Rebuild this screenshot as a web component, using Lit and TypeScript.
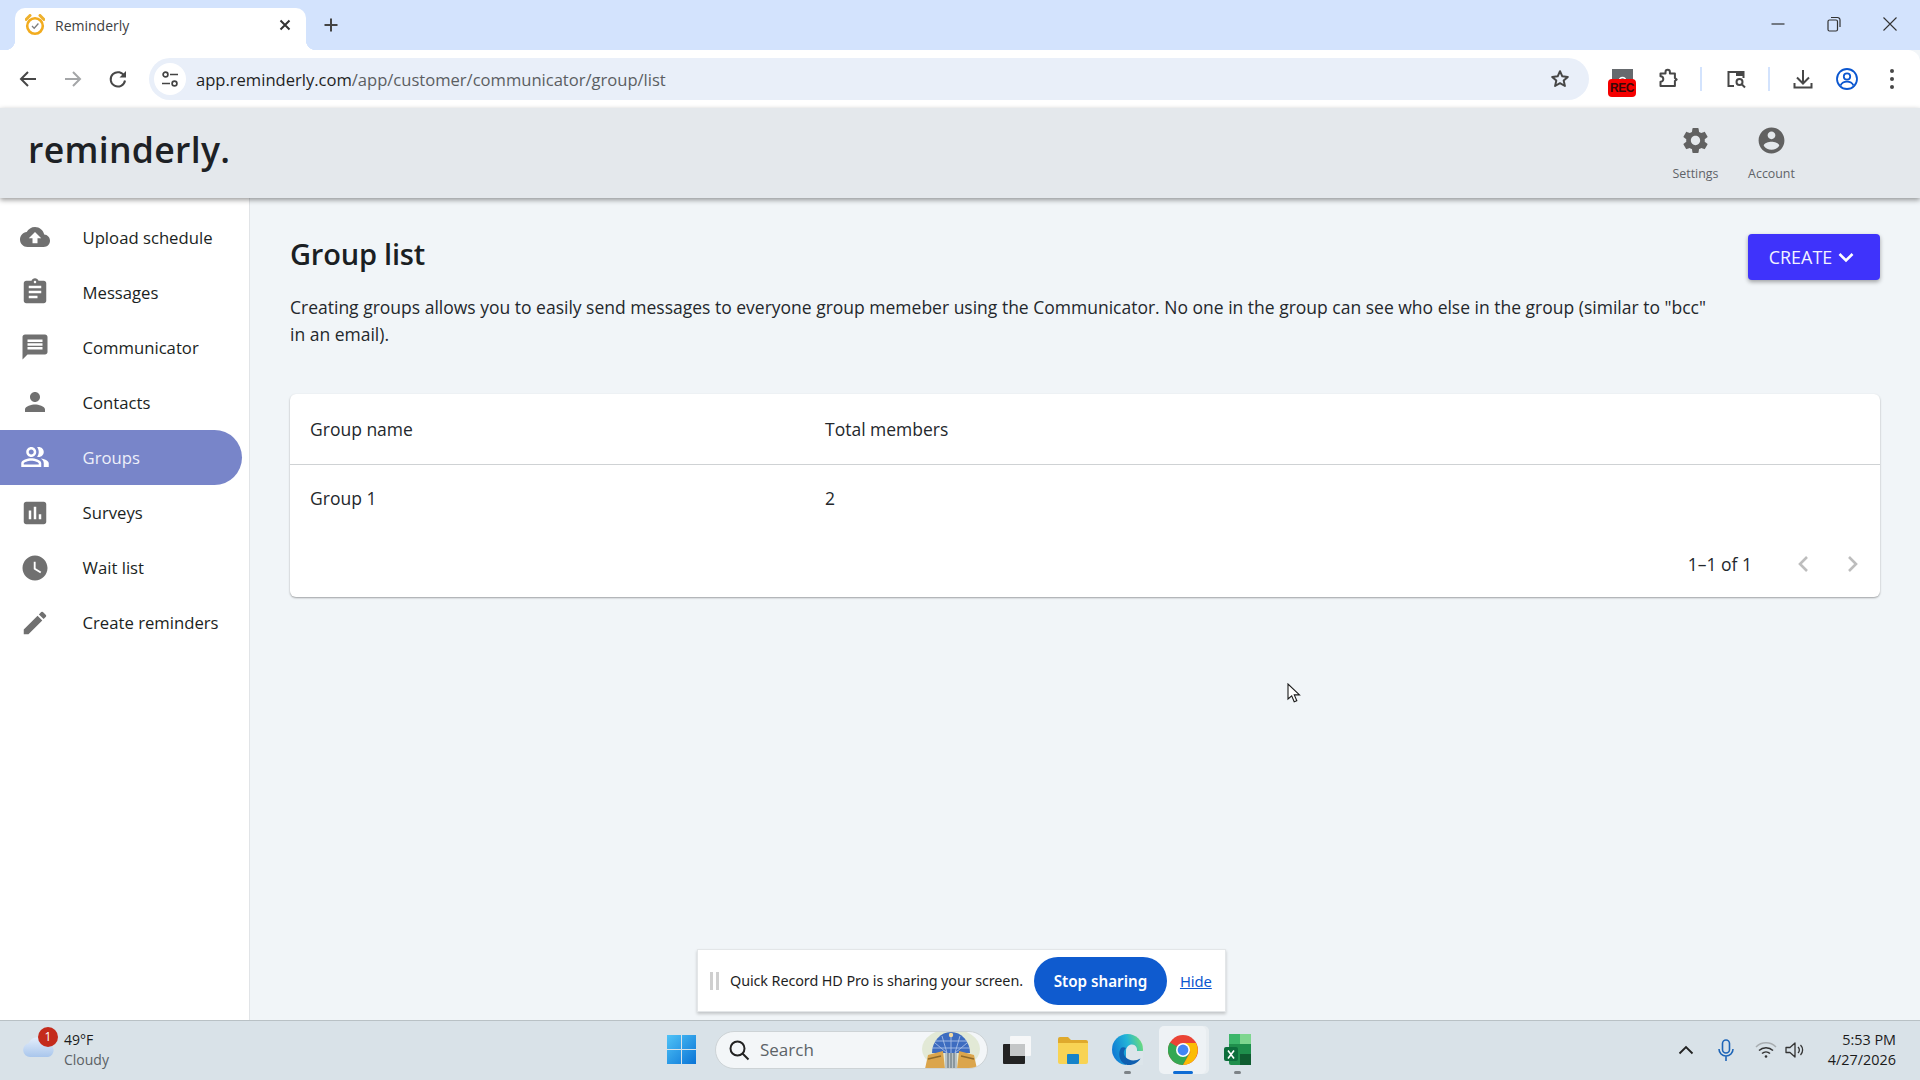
import { LitElement, html, css, svg } from 'lit';
import { customElement } from 'lit/decorators.js';

const navItems = [
  { label: 'Upload schedule', d: 'M19.35 10.04C18.67 6.59 15.64 4 12 4 9.11 4 6.6 5.64 5.35 8.04 2.34 8.36 0 10.91 0 14c0 3.31 2.69 6 6 6h13c2.76 0 5-2.24 5-5 0-2.64-2.05-4.78-4.65-4.96zM14 13v4h-4v-4H7l5-5 5 5h-3z' },
  { label: 'Messages', d: 'M19 3h-4.18C14.4 1.84 13.3 1 12 1c-1.3 0-2.4.84-2.82 2H5c-1.1 0-2 .9-2 2v14c0 1.1.9 2 2 2h14c1.1 0 2-.9 2-2V5c0-1.1-.9-2-2-2zm-7 0c.55 0 1 .45 1 1s-.45 1-1 1-1-.45-1-1 .45-1 1-1zm2 14H7v-2h7v2zm3-4H7v-2h10v2zm0-4H7V7h10v2z' },
  { label: 'Communicator', d: 'M20 2H4c-1.1 0-1.99.9-1.99 2L2 22l4-4h14c1.1 0 2-.9 2-2V4c0-1.1-.9-2-2-2zm-2 12H6v-2h12v2zm0-3H6V9h12v2zm0-3H6V6h12v2z' },
  { label: 'Contacts', d: 'M12 12c2.21 0 4-1.79 4-4s-1.79-4-4-4-4 1.79-4 4 1.79 4 4 4zm0 2c-2.67 0-8 1.34-8 4v2h16v-2c0-2.66-5.33-4-8-4z' },
  { label: 'Groups', active: true, d: 'M16.67 13.13C18.04 14.06 19 15.32 19 17v3h4v-3c0-2.18-3.57-3.47-6.33-3.87zM15 12c2.21 0 4-1.79 4-4s-1.79-4-4-4c-.47 0-.91.1-1.33.24C14.5 5.27 15 6.58 15 8s-.5 2.73-1.33 3.76c.42.14.86.24 1.33.24zM9 12c2.21 0 4-1.79 4-4s-1.79-4-4-4-4 1.79-4 4 1.79 4 4 4zm0-6c1.1 0 2 .9 2 2s-.9 2-2 2-2-.9-2-2 .9-2 2-2zM9 13c-2.67 0-8 1.34-8 4v3h16v-3c0-2.66-5.33-4-8-4zm6 5H3v-.99C3.2 16.29 6.3 15 9 15s5.8 1.29 6 2v1z' },
  { label: 'Surveys', d: 'M19 3H5c-1.1 0-2 .9-2 2v14c0 1.1.9 2 2 2h14c1.1 0 2-.9 2-2V5c0-1.1-.9-2-2-2zM9 17H7v-7h2v7zm4 0h-2V7h2v10zm4 0h-2v-4h2v4z' },
  { label: 'Wait list', d: 'M12 2C6.5 2 2 6.5 2 12s4.5 10 10 10 10-4.5 10-10S17.5 2 12 2zm4.2 14.2L11 13V7h1.5v5.2l4.5 2.7-.8 1.3z' },
  { label: 'Create reminders', d: 'M3 17.25V21h3.75L17.81 9.94l-3.75-3.75L3 17.25zM20.71 7.04c.39-.39.39-1.02 0-1.41l-2.34-2.34a.9959.9959 0 0 0-1.41 0l-1.83 1.83 3.75 3.75 1.83-1.83z' },
];

const gear = 'M19.14 12.94c.04-.3.06-.61.06-.94 0-.32-.02-.64-.07-.94l2.03-1.58c.18-.14.23-.41.12-.61l-1.92-3.32c-.12-.22-.37-.29-.59-.22l-2.39.96c-.5-.38-1.03-.7-1.62-.94l-.36-2.54c-.04-.24-.24-.41-.48-.41h-3.84c-.24 0-.43.17-.47.41l-.36 2.54c-.59.24-1.13.57-1.62.94l-2.39-.96c-.22-.08-.47 0-.59.22L2.74 8.87c-.12.21-.08.47.12.61l2.03 1.58c-.05.3-.09.63-.09.94s.02.64.07.94l-2.03 1.58c-.18.14-.23.41-.12.61l1.92 3.32c.12.22.37.29.59.22l2.39-.96c.5.38 1.03.7 1.62.94l.36 2.54c.05.24.24.41.48.41h3.84c.24 0 .44-.17.47-.41l.36-2.54c.59-.24 1.13-.56 1.62-.94l2.39.96c.22.08.47 0 .59-.22l1.92-3.32c.12-.22.07-.47-.12-.61l-2.01-1.58zM12 15.6c-1.98 0-3.6-1.62-3.6-3.6s1.62-3.6 3.6-3.6 3.6 1.62 3.6 3.6-1.62 3.6-3.6 3.6z';
const account = 'M12 2C6.48 2 2 6.48 2 12s4.48 10 10 10 10-4.48 10-10S17.52 2 12 2zm0 3c1.66 0 3 1.34 3 3s-1.34 3-3 3-3-1.34-3-3 1.34-3 3-3zm0 14.2c-2.5 0-4.71-1.28-6-3.22.03-1.99 4-3.08 6-3.08 1.99 0 5.97 1.09 6 3.08-1.29 1.94-3.5 3.22-6 3.22z';

const matIcon = (d: string, size: number) => html`<svg width=${size} height=${size} viewBox="0 0 24 24" fill="currentColor"><path d=${d}></path></svg>`;

const line = (content: unknown, w = 24, h = 24) => html`<svg width=${w} height=${h} viewBox="0 0 ${w} ${h}" fill="none" stroke="#474747" stroke-width="2">${content}</svg>`;

@customElement('app-root')
export class AppRoot extends LitElement {
  static styles = css`
    :host {
      display: flex;
      flex-direction: column;
      position: relative;
      width: 1920px;
      height: 1080px;
      overflow: hidden;
      font-family: 'Open Sans', 'Noto Sans', sans-serif;
      color: #1b1f23;
      background: #f1f5f8;
    }
    svg { display: block; flex: none; }

    /* browser chrome */
    .tabstrip {
      height: 50px;
      flex: none;
      display: flex;
      background: #d3e3fd;
    }
    .tab {
      position: relative;
      width: 291px;
      height: 42px;
      margin: 8px 0 0 15px;
      padding: 0 15px 8px 10px;
      box-sizing: border-box;
      display: flex;
      align-items: center;
      background: #fff;
      border-radius: 10px 10px 0 0;
      font-size: 14px;
      color: #3c4043;
    }
    .tab::before, .tab::after {
      content: '';
      position: absolute;
      bottom: 0;
      width: 10px;
      height: 10px;
    }
    .tab::before { left: -10px; background: radial-gradient(circle at 0 0, transparent 10px, #fff 10.5px); }
    .tab::after { right: -10px; background: radial-gradient(circle at 100% 0, transparent 10px, #fff 10.5px); }
    .tab-title { flex: 1; margin-left: 10px; }
    .new-tab { margin: 13px 0 0 13px; }
    .window-controls {
      margin-left: auto;
      padding-right: 2px;
      display: flex;
      align-items: flex-start;
    }
    .win-btn { width: 56px; height: 48px; display: flex; align-items: center; justify-content: center; }

    .toolbar {
      height: 58px;
      flex: none;
      display: flex;
      align-items: center;
      padding-left: 5px;
      background: #fff;
      border-radius: 0 12px 0 0;
      position: relative;
      z-index: 1;
    }
    .tb-btn { width: 45px; display: flex; align-items: center; justify-content: center; }
    .urlbar {
      width: 1440px;
      height: 42px;
      margin-left: 9px;
      box-sizing: border-box;
      padding: 0 17px 0 5px;
      display: flex;
      align-items: center;
      background: #e9eff9;
      border-radius: 21px;
    }
    .site-icon {
      width: 32px;
      height: 32px;
      border-radius: 50%;
      background: #fff;
      display: flex;
      align-items: center;
      justify-content: center;
    }
    .url {
      flex: 1;
      margin-left: 10px;
      font-size: 16.6px;
      color: #5b5e62;
      letter-spacing: -0.02px;
    }
    .url b { font-weight: 400; color: #1f1f1f; }
    .tb-right { display: flex; align-items: center; margin-left: 11px; }
    .slot { display: flex; align-items: center; justify-content: center; height: 40px; }
    .w14 { width: 14px; }
    .w18 { width: 18px; }
    .w34 { width: 34px; }
    .w44 { width: 44px; }
    .w48 { width: 48px; }
    .w52 { width: 52px; }
    .w54 { width: 54px; }
    .w56 { width: 56px; }
    .sep { width: 2px; height: 24px; background: #d3e3fd; }
    .rec { width: 28px; height: 28px; margin-top: 8px; display: flex; flex-direction: column; align-items: center; }
    .rec-badge {
      width: 28px;
      height: 18px;
      margin-top: -2px;
      background: #f50000;
      border-radius: 4px;
      color: #3a0808;
      font-family: 'Liberation Sans', sans-serif;
      font-weight: 700;
      font-size: 12px;
      letter-spacing: -0.4px;
      line-height: 19px;
      text-align: center;
    }

    /* app header */
    .app-header {
      height: 90px;
      flex: none;
      display: flex;
      align-items: center;
      padding-left: 28px;
      background: #e4e8ec;
      box-shadow: 0 2px 5px rgba(0, 0, 0, 0.4);
      position: relative;
      z-index: 1;
    }
    .logo { font-size: 35.6px; font-weight: 600; letter-spacing: 0.3px; color: #1d2125; line-height: 1; margin-bottom: 7px; }
    .header-actions { margin-left: auto; margin-right: 125px; display: flex; gap: 29px; }
    .header-action {
      width: 47px;
      height: 57px;
      margin-top: 1px;
      display: flex;
      flex-direction: column;
      align-items: center;
      justify-content: space-between;
      font-size: 12.4px;
      color: #5f6368;
    }
    .header-action svg { color: #616161; }

    /* page */
    .body { flex: 1; display: flex; min-height: 0; }
    .sidebar {
      width: 250px;
      flex: none;
      box-sizing: border-box;
      padding: 11.5px 0 0;
      background: #fff;
      border-right: 1px solid #e1e4e7;
    }
    .nav-item {
      width: 242px;
      height: 55.1px;
      display: flex;
      align-items: center;
      padding-left: 20px;
      box-sizing: border-box;
      font-size: 16.7px;
      color: #1b1f23;
      border-radius: 0 28px 28px 0;
    }
    .nav-item svg { color: #707070; }
    .nav-item span { margin-left: 32.5px; }
    .nav-item.active { background: #7885c9; color: #eef0fa; }
    .nav-item.active svg { color: #fff; }

    .main { flex: 1; min-width: 0; padding: 36px 40px 0; }
    .intro { display: flex; justify-content: space-between; align-items: flex-start; }
    .intro-text { width: 1425px; }
    h1 { margin: 0; font-size: 29px; font-weight: 600; line-height: 40px; color: #1b1f23; letter-spacing: -0.2px; }
    .intro-text p { margin: 20px 0 0; font-size: 17.5px; line-height: 27px; color: #24282c; }
    .create {
      width: 132px;
      height: 46px;
      display: flex;
      align-items: center;
      justify-content: center;
      gap: 4px;
      padding: 0 3px 0 0;
      border: 0;
      border-radius: 4px;
      background: #3f33fb;
      color: #f2f2ff;
      font: 17.9px 'Open Sans', sans-serif;
      box-shadow: 0 2px 4px rgba(0, 0, 0, 0.35);
    }
    .card {
      margin-top: 46px;
      background: #fff;
      border-radius: 6px;
      box-shadow: 0 1px 2px rgba(0, 0, 0, 0.35);
      font-size: 17.5px;
      color: #24282c;
    }
    .row { display: grid; grid-template-columns: 515px 1fr; padding: 0 20px; align-items: center; }
    .row.head { height: 70px; border-bottom: 1px solid #cfd2d4; }
    .row.item { height: 66px; }
    .card-foot { height: 66px; display: flex; align-items: center; justify-content: flex-end; padding-right: 2px; }
    .card-foot span { margin-right: 26px; }
    .pager { width: 50px; display: flex; justify-content: center; }

    /* overlays */
    .share-bar {
      position: absolute;
      left: 697px;
      top: 949px;
      width: 529px;
      height: 63px;
      box-sizing: border-box;
      display: flex;
      align-items: center;
      padding-left: 12px;
      background: #fff;
      border: 1px solid #e3e6e8;
      box-shadow: 0 2px 3px rgba(0, 0, 0, 0.2);
      font-family: 'Noto Sans', sans-serif;
      font-size: 14.4px;
      color: #1f1f1f;
      letter-spacing: -0.1px;
    }
    .grip { width: 9px; height: 18px; border-left: 3px solid #cfcfcf; border-right: 3px solid #cfcfcf; box-sizing: border-box; }
    .share-text { margin-left: 11px; }
    .stop {
      margin-left: 11px;
      width: 133px;
      height: 48px;
      border: 0;
      border-radius: 24px;
      background: #0f5bcf;
      color: #fff;
      font: 600 15.2px 'Noto Sans', sans-serif;
    }
    .hide { margin-left: 13px; color: #0b57d0; text-decoration: underline; font-size: 14.8px; }
    .cursor { position: absolute; left: 1287px; top: 683px; }

    /* taskbar */
    .taskbar {
      height: 60px;
      flex: none;
      display: flex;
      align-items: center;
      padding-bottom: 2px;
      background: #d9e2e8;
      border-top: 1px solid #b9c1c5;
      box-sizing: border-box;
    }
    .weather { width: 666px; flex: none; display: flex; align-items: center; padding-left: 22px; box-sizing: border-box; }
    .weather-icon { position: relative; width: 42px; height: 40px; display: flex; align-items: center; }
    .weather-icon svg { margin-bottom: 8px; }
    .badge {
      position: absolute;
      left: 16px;
      top: -3px;
      width: 20px;
      height: 20px;
      border-radius: 50%;
      background: #c42b1c;
      color: #fff;
      font-size: 12px;
      line-height: 20px;
      text-align: center;
    }
    .weather-text { font-size: 14px; line-height: 20px; color: #1b1b1b; }
    .weather-text div + div { color: #5b6165; }
    .centre { display: flex; align-items: center; }
    .search {
      width: 273px;
      height: 38px;
      margin-left: 18px;
      padding: 0 6px 0 14px;
      box-sizing: border-box;
      display: flex;
      align-items: center;
      background: #f3f6f8;
      border: 1px solid #cdd3d6;
      border-radius: 19px;
      overflow: hidden;
      font-size: 17px;
      color: #5c6367;
    }
    .search svg:first-child { margin-left: -2px; }
    .search-label { margin-left: 10px; flex: 1; }
    .task { width: 55px; height: 48px; position: relative; display: flex; align-items: center; justify-content: center; }
    .task.first { width: 57px; }
    .task.current { background: #eef2f5; border-radius: 5px; width: 47px; margin: 0 4px; box-shadow: 3px 0 0 #e8edf0; }
    .run { position: absolute; bottom: 0; left: 50%; width: 7px; height: 3px; margin-left: -3.5px; background: #7d8387; border-radius: 2px; }
    .task.current .run { width: 20px; margin-left: -10px; background: #0f6cd4; }
    .tray { margin-left: auto; padding-right: 24px; display: flex; align-items: center; }
    .tray-icon { width: 40px; display: flex; justify-content: center; }
    .tray-icon.tight { margin-left: -10px; }
    .clock { margin-left: 12px; text-align: right; font-size: 14.4px; line-height: 20px; color: #1b1b1b; }
  `;

  render() {
    return html`
      <div class="tabstrip">
        <div class="tab">
          <svg width="20" height="22" viewBox="0 0 20 22">
            <path d="M1 5.5 5 1.5 M19 5.5 15 1.5" stroke="#eeb12c" stroke-width="3" stroke-linecap="round"></path>
            <circle cx="10" cy="12" r="7.8" fill="#fff" stroke="#f2ac1f" stroke-width="2.6"></circle>
            <path d="M7 12l2.2 2.2L13.4 9.5" fill="none" stroke="#7d7d7d" stroke-width="1.3"></path>
          </svg>
          <span class="tab-title">Reminderly</span>
          <svg width="12" height="12" viewBox="0 0 12 12"><path d="M1.5 1.5l9 9M10.5 1.5l-9 9" stroke="#333" stroke-width="2"></path></svg>
        </div>
        <div class="new-tab">
          <svg width="24" height="24" viewBox="0 0 24 24"><path d="M12 5.5v13M5.5 12h13" stroke="#444" stroke-width="2"></path></svg>
        </div>
        <div class="window-controls">
          <div class="win-btn"><svg width="14" height="14" viewBox="0 0 14 14"><path d="M0.5 7h13" stroke="#333" stroke-width="1.2"></path></svg></div>
          <div class="win-btn"><svg width="14" height="16" viewBox="0 0 14 16" fill="none" stroke="#333" stroke-width="1.2"><rect x="1" y="4" width="9.5" height="11" rx="1.5"></rect><path d="M4 1.5h6.5a2.5 2.5 0 0 1 2.5 2.5v7"></path></svg></div>
          <div class="win-btn"><svg width="14" height="14" viewBox="0 0 14 14"><path d="M.5.5l13 13M13.5.5l-13 13" stroke="#333" stroke-width="1.1"></path></svg></div>
        </div>
      </div>

      <div class="toolbar">
        <div class="tb-btn">${line(svg`<path d="M20 12H5.5M12 5l-7 7 7 7"></path>`)}</div>
        <div class="tb-btn"><svg width="24" height="24" viewBox="0 0 24 24" fill="none" stroke="#a4a6a8" stroke-width="2"><path d="M4 12h14.5M12 5l7 7-7 7"></path></svg></div>
        <div class="tb-btn">${line(svg`<path d="M18.5 9.5A7.2 7.2 0 1 0 19 13.5"></path><path d="M20 4v6.5h-6.5z" fill="#474747" stroke="none"></path>`)}</div>
        <div class="urlbar">
          <div class="site-icon">
            <svg width="18" height="18" viewBox="0 0 18 18" fill="none" stroke="#444" stroke-width="1.7"><circle cx="4.5" cy="4.5" r="2.4"></circle><path d="M9 4.5h8M1 13.5h8"></path><circle cx="13.5" cy="13.5" r="2.4"></circle></svg>
          </div>
          <div class="url"><b>app.reminderly.com</b>/app/customer/communicator/group/list</div>
          ${line(svg`<path d="M12 4.2l2.3 5.1 5.5.6-4.1 3.7 1.2 5.4L12 16.2 7.1 19l1.2-5.4-4.1-3.7 5.500-.6z" stroke-linejoin="round"></path>`)}
        </div>
        <div class="tb-right">
          <div class="slot w44">
            <div class="rec">
              <svg width="21" height="12" viewBox="0 0 21 12"><rect width="21" height="12" fill="#666a6e"></rect><path d="M7 12a3.5 3.5 0 0 1 7 0" fill="none" stroke="#fff" stroke-width="1.5"></path></svg>
              <div class="rec-badge">REC</div>
            </div>
          </div>
          <div class="slot w48">${line(svg`<path d="M4.5 6.5h5V5a2.2 2.2 0 0 1 4.4 0v1.500h5v4.500l1.800 1.500-1.800 1.500v5H4.500v-4.200a2.800 2.800 0 0 0 0-5.600z" stroke-linejoin="round"></path>`)}</div>
          <div class="slot w18"><div class="sep"></div></div>
          <div class="slot w52">${line(svg`<path d="M10 19H4.500V5h15v6"></path><rect x="12" y="5" width="8" height="4" fill="#474747" stroke="none"></rect><circle cx="15.500" cy="15" r="3"></circle><path d="M18 17.500l3 3"></path>`)}</div>
          <div class="slot w14"><div class="sep"></div></div>
          <div class="slot w54">${line(svg`<path d="M12 3v13M6 10.500l6 6 6-6M3.500 16v4.500h17V16"></path>`)}</div>
          <div class="slot w34">
            <svg width="24" height="24" viewBox="0 0 24 24" fill="none" stroke="#0b57d0" stroke-width="1.800"><circle cx="12" cy="12" r="10"></circle><circle cx="12" cy="9.500" r="3.200"></circle><path d="M5.500 18.500c1.500-3 4-3.800 6.500-3.800s5 .8 6.500 3.800"></path></svg>
          </div>
          <div class="slot w56">
            <svg width="6" height="22" viewBox="0 0 6 22" fill="#474747"><circle cx="3" cy="3" r="2"></circle><circle cx="3" cy="11" r="2"></circle><circle cx="3" cy="19" r="2"></circle></svg>
          </div>
        </div>
      </div>

      <div class="app-header">
        <div class="logo">reminderly.</div>
        <div class="header-actions">
          <div class="header-action">${matIcon(gear, 31)}<span>Settings</span></div>
          <div class="header-action">${matIcon(account, 31)}<span>Account</span></div>
        </div>
      </div>

      <div class="body">
        <nav class="sidebar">
          ${navItems.map(
            (n) => html`<div class="nav-item ${n.active ? 'active' : ''}">${matIcon(n.d, 30)}<span>${n.label}</span></div>`
          )}
        </nav>
        <main class="main">
          <div class="intro">
            <div class="intro-text">
              <h1>Group list</h1>
              <p>Creating groups allows you to easily send messages to everyone group memeber using the Communicator. No one in the group can see who else in the group (similar to "bcc" in an email).</p>
            </div>
            <button class="create">CREATE
              <svg width="20" height="18" viewBox="0 0 20 18" fill="none" stroke="#fff" stroke-width="2.6"><path d="M3.500 6l6.500 6.500L16.500 6"></path></svg>
            </button>
          </div>
          <div class="card">
            <div class="row head"><div>Group name</div><div>Total members</div></div>
            <div class="row item"><div>Group 1</div><div>2</div></div>
            <div class="card-foot">
              <span>1–1 of 1</span>
              <div class="pager"><svg width="14" height="18" viewBox="0 0 14 18" fill="none" stroke="#bdbdbd" stroke-width="2.6"><path d="M11 2L4 9l7 7"></path></svg></div>
              <div class="pager"><svg width="14" height="18" viewBox="0 0 14 18" fill="none" stroke="#bdbdbd" stroke-width="2.6"><path d="M3 2l7 7-7 7"></path></svg></div>
            </div>
          </div>
        </main>
      </div>

      <div class="taskbar">
        <div class="weather">
          <div class="weather-icon">
            <svg width="32" height="24" viewBox="0 0 32 24"><defs><linearGradient id="cl" x1="0" y1="0" x2="0" y2="1"><stop offset="0" stop-color="#e4eefb"></stop><stop offset="1" stop-color="#a9c6ec"></stop></linearGradient></defs><path d="M8 23a7 7 0 0 1-1.5-13.8A10 10 0 0 1 25 9.5 6.8 6.8 0 0 1 26 23z" fill="url(#cl)"></path></svg>
            <div class="badge">1</div>
          </div>
          <div class="weather-text"><div>49°F</div><div>Cloudy</div></div>
        </div>
        <div class="centre">
          <svg width="31" height="31" viewBox="0 0 31 31">
            <defs><linearGradient id="win" x1="0" y1="0" x2="1" y2="1"><stop offset="0" stop-color="#4fc3f7"></stop><stop offset="1" stop-color="#0a74d6"></stop></linearGradient></defs>
            <path d="M1 1h14v14H1zM16 1h14v14H16zM1 16h14v14H1zM16 16h14v14H16z" fill="url(#win)"></path>
          </svg>
          <div class="search">
            <svg width="22" height="22" viewBox="0 0 22 22" fill="none" stroke="#222" stroke-width="2"><circle cx="9.5" cy="9.5" r="7"></circle><path d="M14.5 14.5l6 6"></path></svg>
            <span class="search-label">Search</span>
            <svg width="60" height="38" viewBox="0 0 60 38">
              <ellipse cx="30" cy="18" rx="29" ry="20" fill="#e2e9d6"></ellipse>
              <path d="M11 22a19 21 0 0 1 38 0z" fill="#3d6cc0"></path>
              <path d="M30 2v20M21 5l5 17M39 5l-5 17M14 12l12 10M46 12L34 22M11 17h38M14 10h32" stroke="#a9c0e6" stroke-width="0.9" fill="none"></path>
              <circle cx="30" cy="4" r="2.200" fill="#f3d9a0"></circle>
              <path d="M4 38l3-14 15-4 2 18zM56 38l-3-14-15-4-2 18z" fill="#dba54c"></path>
              <path d="M7 28l13-3M53 28l-13-3" stroke="#8f6a2a" stroke-width="1.500"></path>
              <path d="M24 38V22h12v16z" fill="#b9c2c6"></path>
              <path d="M27 22v16M30 22v16M33 22v16" stroke="#5d6d75" stroke-width="1"></path>
            </svg>
          </div>
          <div class="task first">
            <svg width="28" height="28" viewBox="0 0 28 28">
              <rect x="7" y="0" width="21" height="20" rx="1" fill="#f6f7f8"></rect>
              <rect x="0" y="8" width="22" height="20" rx="1" fill="#232323"></rect>
              <rect x="7" y="8" width="15" height="12" fill="#c4c6c7"></rect>
            </svg>
          </div>
          <div class="task">
            <svg width="30" height="28" viewBox="0 0 30 28"><path d="M0 3a2 2 0 0 1 2-2h8l3 3h15a2 2 0 0 1 2 2v3H0z" fill="#dfa92c"></path><path d="M0 7h30v19a2 2 0 0 1-2 2H2a2 2 0 0 1-2-2z" fill="#f8d354"></path><rect x="9" y="18" width="12" height="10" rx="1" fill="#1683c9"></rect></svg>
          </div>
          <div class="task">
            <svg width="31" height="31" viewBox="0 0 31 31">
              <defs><linearGradient id="edge" x1="0" y1="0.600" x2="1" y2="0.300"><stop offset="0" stop-color="#0f78d4"></stop><stop offset="0.550" stop-color="#22b4d8"></stop><stop offset="1" stop-color="#6fdc78"></stop></linearGradient></defs>
              <circle cx="15.5" cy="15.5" r="15.5" fill="url(#edge)"></circle>
              <path d="M14 17c0-4 3-6.500 6-6.500 3.500 0 5.500 3 5 6.500h6v14H14z" fill="#dce5ea"></path>
              <path d="M9 14C5 20 8 31 17 31c5 0 9-2.500 11.500-6.500-4.500 2.500-11.500 3-15-1.500-2.500-3-2-6.500.5-9-2-1-4-1-5 0z" fill="#0f5fb0"></path>
            </svg>
            <div class="run"></div>
          </div>
          <div class="task current">
            <svg width="30" height="30" viewBox="0 0 30 30">
              <circle cx="15" cy="15" r="15" fill="#ea4335"></circle>
              <path d="M15 15L2 7.500A15 15 0 0 0 15 30l7-13z" fill="#34a853"></path>
              <path d="M15 8h13a15 15 0 0 1-13 22l7.500-13z" fill="#fbbc05"></path>
              <circle cx="15" cy="15" r="7" fill="#fff"></circle>
              <circle cx="15" cy="15" r="5.400" fill="#4285f4"></circle>
            </svg>
            <div class="run"></div>
          </div>
          <div class="task">
            <svg width="27" height="31" viewBox="0 0 27 31">
              <rect x="5" y="0" width="22" height="31" rx="2" fill="#1f8f4c"></rect>
              <rect x="16" y="0" width="11" height="10" fill="#7ed68f"></rect>
              <rect x="5" y="0" width="11" height="10" fill="#3cb66a"></rect>
              <rect x="16" y="20" width="11" height="11" fill="#0f5c30"></rect>
              <rect x="0" y="13" width="14" height="14" rx="2" fill="#0d6e3c"></rect>
              <path d="M4 16.500l6 8M10 16.500l-6 8" stroke="#fff" stroke-width="1.6"></path>
            </svg>
            <div class="run"></div>
          </div>
        </div>
        <div class="tray">
          <div class="tray-icon"><svg width="16" height="10" viewBox="0 0 16 10" fill="none" stroke="#222" stroke-width="1.8"><path d="M1.500 8.500L8 2l6.500 6.500"></path></svg></div>
          <div class="tray-icon"><svg width="16" height="22" viewBox="0 0 16 22" fill="none" stroke="#1e65b7" stroke-width="1.6"><rect x="4.500" y="1" width="7" height="13" rx="3.500"></rect><path d="M1 10a7 7 0 0 0 14 0M8 17v5"></path></svg></div>
          <div class="tray-icon"><svg width="22" height="18" viewBox="0 0 22 18" fill="none" stroke="#333" stroke-width="1.5"><path d="M1 6a14 14 0 0 1 20 0" stroke="#a9aeb1"></path><path d="M4 9.500a10 10 0 0 1 14 0M7 12.500a6 6 0 0 1 8 0"></path><circle cx="11" cy="15.500" r="1.3" fill="#333" stroke="none"></circle></svg></div>
          <div class="tray-icon tight"><svg width="22" height="18" viewBox="0 0 22 18" fill="none" stroke="#333" stroke-width="1.3"><path d="M1 6.500h4L10 2v14l-5-4.500H1z" stroke-linejoin="round"></path><path d="M13 6a4 4 0 0 1 0 6M15.500 4a7 7 0 0 1 0 10"></path></svg></div>
          <div class="clock"><div>5:53 PM</div><div>4/27/2026</div></div>
        </div>
      </div>

      <div class="share-bar">
        <div class="grip"></div>
        <span class="share-text">Quick Record HD Pro is sharing your screen.</span>
        <button class="stop">Stop sharing</button>
        <span class="hide">Hide</span>
      </div>
      <svg class="cursor" width="14" height="21" viewBox="0 0 14 21"><path d="M1 1v15l3.700-3.200 2.500 6 2.600-1.100-2.500-5.800H12.500z" fill="#fff" stroke="#1a1a1a" stroke-width="1.1"></path></svg>
    `;
  }
}
